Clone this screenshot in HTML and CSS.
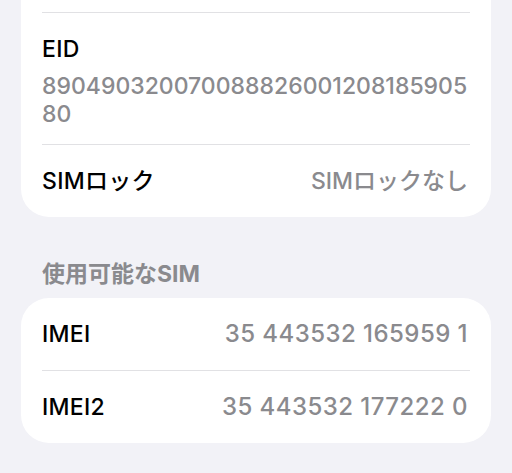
FILE: index.html
```html
<!DOCTYPE html>
<html lang="ja">
<head>
<meta charset="utf-8">
<title>SIM</title>
<link rel="stylesheet" href="styles.css">
</head>
<body>
<div class="screen">
  <section class="card card-top">
    <div class="row-cut"></div>
    <div class="row row-stack">
      <div class="label">EID</div>
      <div class="value value-wrap">89049032007008882600120818590580</div>
    </div>
    <div class="row">
      <div class="label">SIMロック</div>
      <div class="value">SIMロックなし</div>
    </div>
  </section>

  <h2 class="section-header">使用可能なSIM</h2>

  <section class="card">
    <div class="row">
      <div class="label">IMEI</div>
      <div class="value value-num">35 443532 165959 1</div>
    </div>
    <div class="row">
      <div class="label">IMEI2</div>
      <div class="value value-num">35 443532 177222 0</div>
    </div>
  </section>
</div>
</body>
</html>
```

FILE: styles.css
```css
* { box-sizing: border-box; margin: 0; padding: 0; }

html, body {
  background: #f2f2f7;
}

body {
  font-family: Inter, "Noto Sans CJK JP", sans-serif;
  color: #000;
  width: 512px;
  height: 473px;
  overflow: hidden;
}

.screen {
  padding: 0 21px;
}

.card {
  background: #fff;
  border-radius: 28px;
  padding: 0 21px 0 21px;
}

.card-top {
  border-top-left-radius: 0;
  border-top-right-radius: 0;
}

.row-cut {
  height: 12px;
}

.row {
  display: flex;
  justify-content: space-between;
  align-items: center;
  padding: 22px 2px 22px 0;
  font-size: 23px;
  line-height: 28px;
  border-top: 1px solid #e1e1e4;
}

.card > .row:first-child {
  border-top: none;
}

.row-stack {
  flex-direction: column;
  align-items: flex-start;
  gap: 9px;
  padding-bottom: 16px;
}

.label {
  font-weight: 550;
  color: #000;
  letter-spacing: 0.3px;
}

.value {
  color: #8a8a8e;
  font-weight: 500;
}

.value-wrap {
  word-break: break-all;
  width: 100%;
}

.value-num {
  font-size: 24px;
  letter-spacing: 0.45px;
}

.section-header {
  font-family: Inter, "Noto Sans CJK JP", sans-serif;
  font-size: 23px;
  font-weight: 700;
  color: #8a8a8e;
  line-height: 28px;
  padding: 43px 21px 10px 21px;
}
```
